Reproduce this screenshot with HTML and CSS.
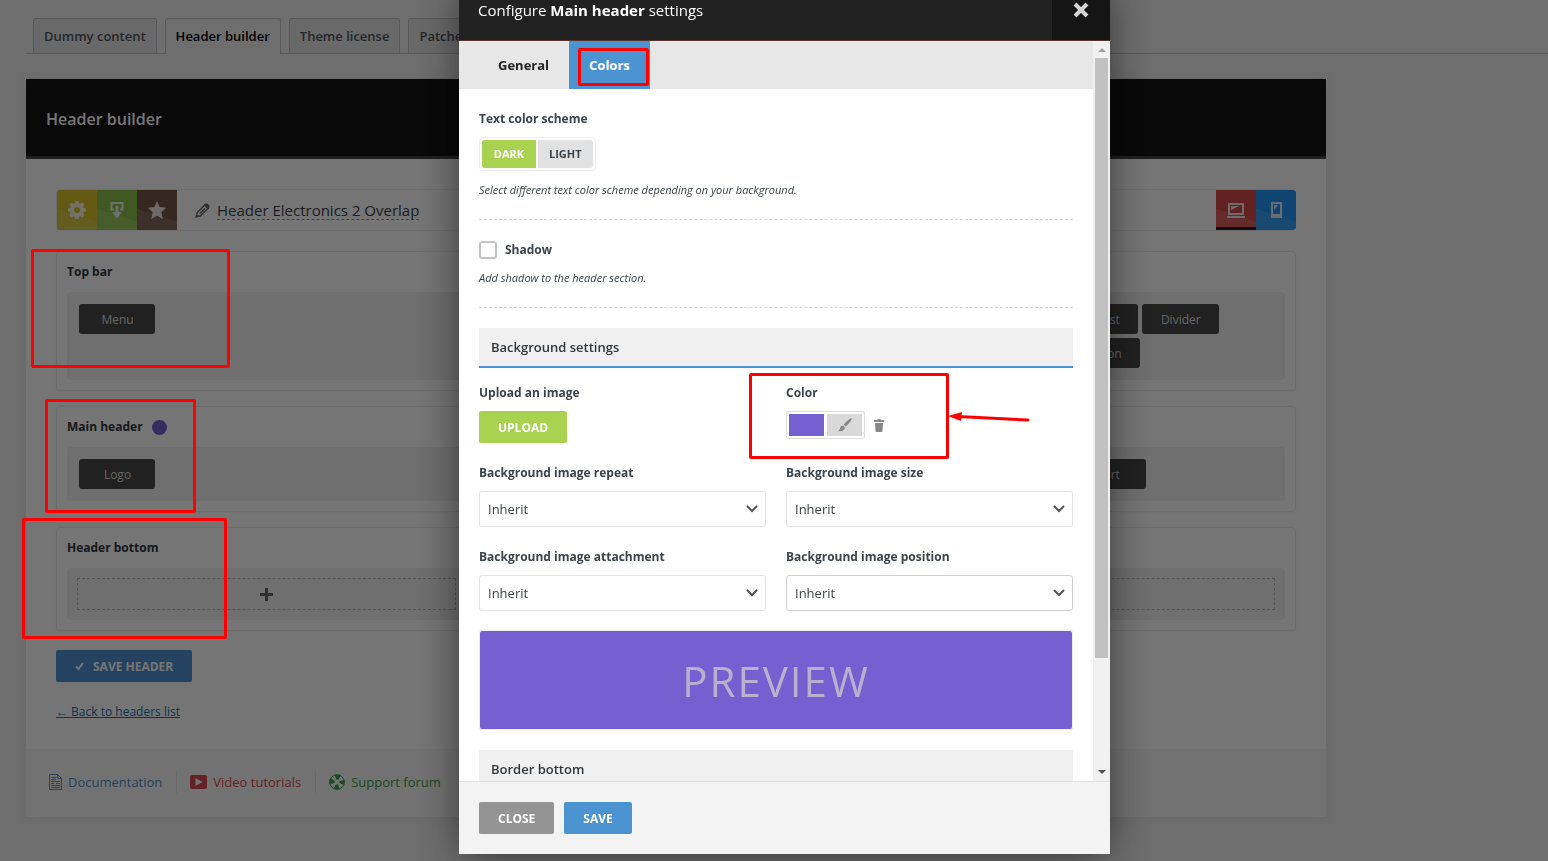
FILE: index.html
```html
<!DOCTYPE html>
<html lang="en">
<head>
<meta charset="utf-8">
<meta name="viewport" content="width=device-width, initial-scale=1">
<title>Header builder</title>
<link rel="stylesheet" href="styles.css">
</head>
<body>

<div class="wrap">
<nav class="nav-tabs">
	<a href="#" class="nav-tab">Dummy content</a>
	<a href="#" class="nav-tab active">Header builder</a>
	<a href="#" class="nav-tab">Theme license</a>
	<a href="#" class="nav-tab">Patcher</a>
</nav>

<div class="panel">
	<div class="panel-head"><h1>Header builder</h1></div>

	<div class="panel-body">
		<div class="toolbar">
			<button class="tool yellow" aria-label="Settings">
				<svg width="18" height="18" viewBox="0 0 18 18"><path fill="#fff" fill-rule="evenodd" d="M7.400 0h3.200l.5 2.300 1.200.5 2-1.300 2.200 2.200-1.300 2 .5 1.200 2.300.5v3.200l-2.300.5-.5 1.200 1.300 2-2.200 2.200-2-1.300-1.200.5-.5 2.300H7.400l-.5-2.300-1.200-.5-2 1.300-2.200-2.200 1.300-2-.5-1.200L0 10.600V7.400l2.300-.5.5-1.200-1.300-2 2.200-2.200 2 1.300 1.200-.5zM9 6a3 3 0 1 0 0 6 3 3 0 0 0 0-6z"/></svg>
			</button>
			<button class="tool green" aria-label="Import">
				<svg width="16" height="18" viewBox="0 0 16 18"><path fill="none" stroke="#fff" stroke-width="2" d="M5 8.500H2.500V2h11v6.500H11"/><path fill="#fff" d="M6.500 5h3v6H13l-5 6.500L3 11h3.500z"/></svg>
			</button>
			<button class="tool brown" aria-label="Examples">
				<svg width="20" height="20" viewBox="0 0 20 20"><path fill="#fff" d="M10 1l2.700 6.100 6.600.7-4.900 4.500 1.300 6.700-5.700-3.400L4.300 19l1.300-6.700L.7 7.800l6.600-.7z"/></svg>
			</button>
			<svg class="pencil" width="15" height="15" viewBox="0 0 15 15"><path fill="none" stroke="#666" stroke-width="1.400" d="M1.200 13.800l1-4.300L9.800 1.900l3.300 3.300-7.600 7.600zM5 10.200l5-5"/><path fill="#666" d="M8.800 2l1.700-1.500h1.800l2.200 2.200v1.800L13 6.200zM.5 14.500l.9-3.500 2.600 2.600z"/></svg>
			<span class="header-name">Header Electronics 2 Overlap</span>
			<span class="spacer"></span>
			<button class="tool red current" aria-label="Desktop">
				<svg width="18" height="16" viewBox="0 0 18 16"><path fill="none" stroke="#fff" stroke-width="2" d="M2 2h14v10H2z"/><path fill="#fff" d="M4 4h8l-8 4zM0 14h18v2H0z"/></svg>
			</button>
			<button class="tool blue" aria-label="Mobile">
				<svg width="11" height="16" viewBox="0 0 11 16"><path fill="#fff" fill-rule="evenodd" d="M0 0h11v16H0zM2 2v10h7V2z"/><path fill="#fff" d="M3 3h4L3 8z"/></svg>
			</button>
		</div>

		<section class="row-card">
			<h2>Top bar</h2>
			<div class="columns">
				<div class="column"><button class="element">Menu</button></div>
				<div class="column"></div>
				<div class="column">
					<button class="element">Search</button>
					<button class="element">Space</button>
					<button class="element">Wishlist</button>
					<button class="element">Divider</button>
					<button class="element">Text</button>
					<button class="element">Account</button>
					<button class="element">Button</button>
				</div>
			</div>
		</section>

		<section class="row-card">
			<h2>Main header <i class="dot"></i></h2>
			<div class="columns">
				<div class="column"><button class="element">Logo</button></div>
				<div class="column"></div>
				<div class="column">
					<button class="element wide">Account</button>
					<button class="element">Cart</button>
				</div>
			</div>
		</section>

		<section class="row-card">
			<h2>Header bottom</h2>
			<div class="columns">
				<div class="column empty"><button class="add" aria-label="Add element"></button></div>
				<div class="column empty"><button class="add" aria-label="Add element"></button></div>
				<div class="column empty"><button class="add" aria-label="Add element"></button></div>
			</div>
		</section>

		<button class="btn btn-blue save-header">
			<svg width="9" height="9" viewBox="0 0 9 9"><path fill="none" stroke="#fff" stroke-width="2" d="M1 4.500L3.500 7 8 1"/></svg>
			Save header
		</button>
		<a href="#" class="back">← Back to headers list</a>
	</div>

	<footer class="panel-foot">
		<a href="#" class="docs">
			<svg width="13" height="16" viewBox="0 0 13 16"><path fill="none" stroke="currentColor" d="M.5.5h8l4 4v11H.5zM8.500.5v4h4M2 3.500h5M2 5.500h5M2 7.500h9M2 9.500h3M7 9.500h4M2 11.500h9M2 13.500h9"/></svg>
			Documentation
		</a>
		<a href="#" class="videos">
			<svg width="17" height="14" viewBox="0 0 17 14"><path fill="currentColor" fill-rule="evenodd" d="M2 0h13q2 0 2 2v10q0 2-2 2H2q-2 0-2-2V2q0-2 2-2zM5.500 3v8l7-4z"/></svg>
			Video tutorials
		</a>
		<a href="#" class="forum">
			<svg width="16" height="16" viewBox="0 0 16 16"><circle cx="8" cy="8" r="7.300" fill="none" stroke="currentColor"/><circle cx="8" cy="8" r="5" fill="none" stroke="currentColor" stroke-width="5" stroke-dasharray="4.300 3.550" stroke-dashoffset="2.150"/></svg>
			Support forum
		</a>
	</footer>
</div>
</div>

<!-- row settings popup -->
<div class="overlay">
<div class="modal" role="dialog" aria-labelledby="modalTitle">
	<header class="modal-head">
		<h2 id="modalTitle">Configure <b>Main header</b> settings</h2>
		<button class="modal-x" aria-label="Close popup">
			<svg width="16" height="16" viewBox="0 0 16 16"><path stroke="#d5d5d5" stroke-width="4" d="M2 2l12 12M14 2L2 14"/></svg>
		</button>
	</header>

	<div class="modal-main">
	<div class="modal-scroll">
		<div class="tabs">
			<button class="tab">General</button>
			<button class="tab active">Colors<i class="mark mark-tab"></i></button>
		</div>

		<div class="options">
			<div class="option">
				<span class="label">Text color scheme</span>
				<div class="switch">
					<button class="on">Dark</button>
					<button>Light</button>
				</div>
				<p class="desc">Select different text color scheme depending on your background.</p>
			</div>

			<div class="option">
				<div class="check">
					<input type="checkbox" id="shadow">
					<label for="shadow" class="label">Shadow</label>
				</div>
				<p class="desc">Add shadow to the header section.</p>
			</div>

			<h3 class="group-title open">Background settings</h3>
			<div class="fields">
				<div class="field">
					<span class="label">Upload an image</span>
					<button class="btn btn-green">Upload</button>
				</div>
				<div class="field">
					<span class="label">Color</span>
					<div class="color-row">
						<button class="picker" aria-label="Select color">
							<span class="swatch"></span>
							<span class="brush"><svg width="14" height="14" viewBox="0 0 14 14"><path fill="#888" d="M13.500.3c.8.8-1.500 4.700-5.800 8.200L5.800 6.600C9 2.500 12.800-.4 13.500.3zM5 7.500l1.800 1.800c.1 2.200-2.200 4.400-6.600 3.900C2.700 12 1.500 7.500 5 7.500z"/></svg></span>
						</button>
						<button class="trash" aria-label="Clear color"><svg width="10" height="13" viewBox="0 0 10 13"><path fill="#888" d="M3.500 0h3v1H10v2H0V1h3.500zM1 4h8l-.5 8q-.1 1-1 1h-5q-.9 0-1-1z"/></svg></button>
					</div>
					<i class="mark mark-color"></i>
					<svg class="arrow" width="82" height="12" viewBox="0 0 82 12"><path stroke="#f00" stroke-width="3" stroke-linecap="round" d="M10 4.500L80 8"/><path fill="#f00" d="M0 4L14 0l-1 9z"/></svg>
				</div>
				<div class="field">
					<label class="label" for="repeat">Background image repeat</label>
					<select id="repeat"><option>Inherit</option><option>No repeat</option><option>Repeat</option></select>
				</div>
				<div class="field">
					<label class="label" for="size">Background image size</label>
					<select id="size"><option>Inherit</option><option>Cover</option><option>Contain</option></select>
				</div>
				<div class="field">
					<label class="label" for="attachment">Background image attachment</label>
					<select id="attachment"><option>Inherit</option><option>Fixed</option><option>Scroll</option></select>
				</div>
				<div class="field">
					<label class="label" for="position">Background image position</label>
					<select id="position" class="touched"><option>Inherit</option><option>Center center</option></select>
				</div>
			</div>
			<div class="preview">PREVIEW</div>

			<h3 class="group-title">Border bottom</h3>
		</div>
	</div>
	<div class="scrollbar">
		<i class="sb-up"></i>
		<div class="sb-track"><div class="sb-thumb"></div></div>
		<i class="sb-down"></i>
	</div>
	</div>

	<footer class="modal-foot">
		<button class="btn btn-gray">Close</button>
		<button class="btn btn-blue">Save</button>
	</footer>
</div>
</div>

<!-- red callouts over the page -->
<i class="mark mark-top"></i>
<i class="mark mark-main"></i>
<i class="mark mark-bottom"></i>

</body>
</html>
```

FILE: styles.css
```css
* { box-sizing: border-box; }

body {
	margin: 0;
	height: 100vh;
	overflow: hidden;
	background: #f0f0f1;
	color: #3c434a;
	font: 13px/18px "Open Sans", "Noto Sans", sans-serif;
}
h1, h2, h3, p { margin: 0; }
button {
	font: inherit;
	border: 0;
	padding: 0;
	cursor: pointer;
}
svg { display: block; flex: none; }

/* page tabs */
.wrap { padding: 18px 0 0 26px; }
.nav-tabs {
	display: flex;
	gap: 8px;
	padding-left: 7px;
	border-bottom: 1px solid #c3c4c7;
}
.nav-tab {
	height: 35px;
	padding: 0 10px;
	border: 1px solid #c3c4c7;
	border-bottom: 0;
	border-radius: 3px 3px 0 0;
	background: #e5e5e5;
	color: #50575e;
	font-size: 13px;
	font-weight: 600;
	line-height: 35px;
	text-decoration: none;
}
.nav-tab.active {
	margin-bottom: -1px;
	height: 36px;
	background: #f0f0f1;
	color: #000;
}

/* panel */
.panel {
	max-width: 1300px;
	margin-top: 25px;
	background: #fff;
	box-shadow: 0 0 12px rgba(0,0,0,.08);
}
.panel-head {
	display: flex;
	align-items: center;
	height: 80px;
	padding: 2px 20px 0;
	background: #141414;
	border-bottom: 3px solid #444;
}
.panel-head h1 {
	color: #fff;
	font-size: 16px;
	font-weight: 600;
	line-height: 24px;
}
.panel-body {
	display: flex;
	flex-direction: column;
	align-items: flex-start;
	padding: 30px 30px 28px;
}

.toolbar {
	display: flex;
	align-items: center;
	align-self: stretch;
	height: 42px;
	border: 1px solid #f0f0f0;
	border-right: 0;
	border-radius: 4px;
	overflow: hidden;
}
.tool {
	display: flex;
	align-items: center;
	justify-content: center;
	width: 40px;
	height: 40px;
}
.tool svg { opacity: .85; }
.yellow { background: linear-gradient(198deg, #d9c32a 60%, #ddca45 60%); }
.green { background: linear-gradient(198deg, #8bc34a 60%, #98ca5e 60%); }
.brown { background: linear-gradient(198deg, #795548 60%, #85665a 60%); }
.red { background: linear-gradient(198deg, #d84a4a 60%, #dc5c5c 60%); }
.blue { background: linear-gradient(198deg, #2196f3 60%, #379ff3 60%); }
.current { box-shadow: inset 0 -3px #222; }
.pencil { margin: 0 7px 0 18px; }
.header-name {
	border-bottom: 1px dashed #999;
	font-size: 15px;
	line-height: 18px;
	color: #3c434a;
}
.spacer { flex: 1; }

/* header rows */
.row-card {
	align-self: stretch;
	margin-top: 15px;
	padding: 10px;
	border: 1px solid #eaeaea;
	border-radius: 4px;
	box-shadow: 0 0 3px rgba(0,0,0,.05);
}
.toolbar + .row-card { margin-top: 20px; }
.row-card h2 {
	display: flex;
	align-items: center;
	gap: 9px;
	height: 20px;
	margin-bottom: 10px;
	color: #32373c;
	font-size: 12px;
	font-weight: 700;
}
.dot {
	width: 15px;
	height: 15px;
	border-radius: 50%;
	background: #7460d1;
}
.columns {
	display: grid;
	grid-template-columns: repeat(3, 1fr);
	gap: 10px;
	background: #f1f1f1;
	border-radius: 4px;
}
.column {
	display: flex;
	flex-wrap: wrap;
	align-content: flex-start;
	gap: 4px;
	padding: 12px;
}
.element {
	min-width: 76px;
	height: 30px;
	padding: 1px 18px 0 19px;
	border-radius: 3px;
	background: #484848;
	color: #ddd;
	font-size: 12px;
}
.element.wide { min-width: 168px; }
.column.empty { padding: 10px; }
.add {
	width: 100%;
	height: 32px;
	border: 1px dashed #bbb;
	background: linear-gradient(#666, #666) center/13px 3px no-repeat, linear-gradient(#666, #666) center/3px 13px no-repeat;
}

.btn {
	height: 32px;
	padding: 1px 19px 0;
	border-radius: 2px;
	color: #fff;
	font-size: 12px;
	font-weight: 700;
	text-transform: uppercase;
}
.btn-blue { background: #4c93d2; }
.btn-green { background: #a9d250; }
.btn-gray { background: #949494; }
.save-header {
	display: flex;
	align-items: center;
	gap: 9px;
	margin-top: 19px;
}
.back {
	margin-top: 21px;
	color: #2271b1;
	font-size: 12px;
}

.panel-foot {
	display: flex;
	align-items: center;
	height: 68px;
	padding: 0 23px 3px;
	border-top: 1px solid #f3f3f3;
	background: #f9f9f9;
}
.panel-foot a {
	display: flex;
	align-items: center;
	gap: 6px;
	height: 22px;
	padding-right: 14px;
	margin-right: 13px;
	border-right: 1px solid #e5e5e5;
	font-size: 13px;
	text-decoration: none;
}
.panel-foot a:last-child { border: 0; }
.docs { color: #5b93c5; }
.videos { color: #dc4b52; }
.forum { color: #3fa150; }

/* popup */
.overlay {
	position: fixed;
	inset: 0;
	display: flex;
	justify-content: center;
	align-items: flex-end;
	padding: 0 0 7px 21px;
	overflow: hidden;
	background: rgba(0,0,0,.54);
}
.modal {
	width: 651px;
	max-width: 100%;
	flex: none;
	background: #fff;
	box-shadow: 0 5px 40px rgba(0,0,0,.5);
}
.modal-head {
	display: flex;
	align-items: center;
	justify-content: space-between;
	height: 60px;
	padding-left: 19px;
	background: #222;
	border-bottom: 1px solid #55332f;
}
.modal-head h2 {
	padding-bottom: 2px;
	color: #fff;
	font-size: 15px;
	font-weight: 400;
}
.modal-x {
	display: flex;
	align-items: center;
	justify-content: center;
	align-self: stretch;
	width: 58px;
	padding-bottom: 2px;
	background: #151515;
}
.modal-main {
	display: flex;
	height: calc(100vh - 121px);
}
.modal-scroll {
	flex: 1;
	overflow: hidden;
}
.tabs {
	display: flex;
	padding-left: 19px;
	background: #e7e7e7;
}
.tab {
	position: relative;
	height: 48px;
	padding: 0 20px;
	background: none;
	color: #222;
	font-size: 13px;
	font-weight: 700;
}
.tab.active {
	background: #4c93d2;
	color: #fff;
}
.options { padding: 20px; }
.option {
	padding-bottom: 20px;
	border-bottom: 1px dashed #d5d5d5;
}
.option + .option {
	padding-top: 21px;
	margin-bottom: 20px;
}
.label {
	display: block;
	font-size: 12px;
	font-weight: 700;
	line-height: 20px;
}
.switch {
	display: inline-flex;
	gap: 2px;
	margin-top: 8px;
	padding: 2px;
	border: 1px solid #eee;
	border-radius: 4px;
	vertical-align: top;
}
.switch button {
	height: 28px;
	min-width: 54px;
	padding: 0 11px;
	border-radius: 0 3px 3px 0;
	background: #e2e2e2;
	color: #3c434a;
	font-size: 11px;
	font-weight: 700;
	text-transform: uppercase;
}
.switch .on {
	border-radius: 3px 0 0 3px;
	background: #a9d250;
	color: #fff;
}
.desc {
	margin-top: 10px;
	font-size: 11px;
	font-style: italic;
}
.check {
	display: flex;
	align-items: center;
	gap: 8px;
	height: 18px;
}
.check input {
	appearance: none;
	width: 18px;
	height: 18px;
	margin: 0;
	border: 2px solid #c3c3c3;
	border-radius: 3px;
	background: #fff;
}
.group-title {
	height: 40px;
	padding: 0 12px;
	background: #f0f0f0;
	color: #32373c;
	font-size: 13px;
	font-weight: 600;
	line-height: 38px;
}
.group-title.open { border-bottom: 2px solid #4c93d2; }
.fields {
	display: grid;
	grid-template-columns: 1fr 1fr;
	gap: 20px;
	margin: 15px 0 19px;
}
.field { position: relative; }
.field .label { margin-bottom: 8px; }
select {
	appearance: none;
	display: block;
	width: 100%;
	height: 36px;
	padding: 0 8px;
	border: 1px solid #e5e5e5;
	border-radius: 3px;
	background: #fff url("data:image/svg+xml,%3Csvg xmlns='http://www.w3.org/2000/svg' width='12' height='8'%3E%3Cpath d='M1 1l5 5 5-5' fill='none' stroke='%23555' stroke-width='2'/%3E%3C/svg%3E") no-repeat right 7px center;
	color: #3c434a;
	font: inherit;
}
select.touched { border-color: #d0d0d0; }
.color-row {
	display: flex;
	align-items: center;
	gap: 9px;
}
.picker {
	display: flex;
	gap: 3px;
	padding: 2px;
	border: 1px solid #ddd;
	border-radius: 2px;
	background: #fff;
}
.swatch, .brush {
	display: flex;
	align-items: center;
	justify-content: center;
	width: 35px;
	height: 22px;
	background: #7460d1;
}
.brush { background: #d9d9d9; }
.trash { background: none; }
.preview {
	height: 100px;
	margin-bottom: 20px;
	border: 1px solid #eee;
	border-radius: 3px;
	background: #7460d1;
	color: rgba(204,204,204,.75);
	font-size: 42px;
	letter-spacing: 2px;
	line-height: 100px;
	text-align: center;
}

.scrollbar {
	display: flex;
	flex-direction: column;
	align-items: center;
	width: 17px;
	background: #f1f1f1;
}
.sb-up, .sb-down {
	margin: 7px 0 6px;
	border: 4px solid transparent;
	border-top: 0;
	border-bottom-color: #a3a3a3;
}
.sb-down {
	margin: 6px 0 7px;
	border-top: 4px solid #505050;
	border-bottom: 0;
}
.sb-track {
	flex: 1;
	width: 13px;
}
.sb-thumb {
	height: 85%;
	background: #c1c1c1;
}

.modal-foot {
	display: flex;
	gap: 10px;
	height: 73px;
	padding: 20px;
	border-top: 1px solid #e1e1e1;
	background: #f3f3f3;
}

/* callouts */
.mark {
	position: absolute;
	border: 3px solid #f00;
	border-radius: 2px;
	pointer-events: none;
}
.mark-top { left: 31px; top: 249px; width: 199px; height: 119px; }
.mark-main { left: 45px; top: 399px; width: 151px; height: 114px; }
.mark-bottom { left: 22px; top: 518px; width: 205px; height: 121px; }
.mark-tab { left: 9px; top: 7px; width: 71px; height: 38px; }
.mark-color { left: -37px; top: -10px; width: 200px; height: 86px; }
.arrow {
	position: absolute;
	left: 162px;
	top: 29px;
}
```
